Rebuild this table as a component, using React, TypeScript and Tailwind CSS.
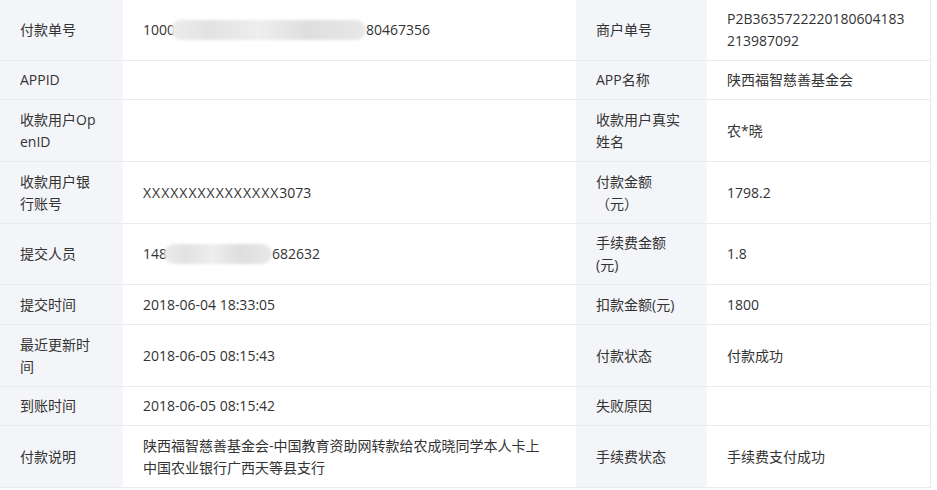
import React from "react";

type Row = {
  h: string;
  l1: React.ReactNode;
  v1?: React.ReactNode;
  l2: React.ReactNode;
  v2?: React.ReactNode;
};

function Masked({ width }: { width: string }) {
  // blurred part of an id, as in the screenshot
  return (
    <span
      className={`inline-block h-[20px] align-middle rounded-full blur-[1.5px] bg-[linear-gradient(90deg,#ececec_0%,#e2e2e2_20%,#eeeeee_45%,#dedede_70%,#e8e8e8_100%)] ${width}`}
    />
  );
}

const rows: Row[] = [
  {
    h: "h-[61px]",
    l1: "付款单号",
    v1: (
      <span className="flex items-center">
        <span>1000</span>
        <span className="-ml-[4px] flex"><Masked width="w-[195px]" /></span>
        <span>80467356</span>
      </span>
    ),
    l2: "商户单号",
    v2: (
      <>
        P2B3635722220180604183
        <br />
        213987092
      </>
    ),
  },
  { h: "h-[39px]", l1: "APPID", l2: "APP名称", v2: "陕西福智慈善基金会" },
  { h: "h-[62px]", l1: "收款用户OpenID", l2: "收款用户真实姓名", v2: "农*晓" },
  {
    h: "h-[62px]",
    l1: "收款用户银行账号",
    v1: (
      <span>
        <span className="tracking-[1px]">XXXXXXXXXXXXXXX</span>3073
      </span>
    ),
    l2: "付款金额（元）",
    v2: "1798.2",
  },
  {
    h: "h-[61px]",
    l1: "提交人员",
    v1: (
      <span className="flex items-center">
        <span>148</span>
        <span className="-ml-[3px] flex"><Masked width="w-[108px]" /></span>
        <span>682632</span>
      </span>
    ),
    l2: "手续费金额(元)",
    v2: "1.8",
  },
  { h: "h-[40px]", l1: "提交时间", v1: "2018-06-04 18:33:05", l2: "扣款金额(元)", v2: "1800" },
  { h: "h-[62px]", l1: "最近更新时间", v1: "2018-06-05 08:15:43", l2: "付款状态", v2: "付款成功" },
  { h: "h-[39px]", l1: "到账时间", v1: "2018-06-05 08:15:42", l2: "失败原因" },
  {
    h: "h-[62px]",
    l1: "付款说明",
    v1: "陕西福智慈善基金会-中国教育资助网转款给农成晓同学本人卡上中国农业银行广西天等县支行",
    l2: "手续费状态",
    v2: "手续费支付成功",
  },
];

export default function App() {
  return (
    <div className="w-[937px] h-[490px] bg-white overflow-hidden font-['Open_Sans','Noto_Sans_CJK_SC',sans-serif] text-[14px] leading-[22px] text-[#333]">
      <div className="w-[931px] border-r border-[#e8eaec]">
        {rows.map((r, i) => (
          <div
            key={i}
            className={cn(
              "grid grid-cols-[123px_453px_131px_223px] border-b border-[#e8eaec]",
              r.h
            )}
          >
            <div className="bg-[#f4f5f9] pl-[20px] pr-[27px] flex items-center break-all">{r.l1}</div>
            <div className="pl-[20px] pr-[30px] flex items-center">{r.v1}</div>
            <div className="bg-[#f4f5f9] pl-[20px] pr-[25px] flex items-center">{r.l2}</div>
            <div className="pl-[20px] pr-[10px] flex items-center">
              <div>{r.v2}</div>
            </div>
          </div>
        ))}
      </div>
    </div>
  );
}

function cn(...c: string[]) {
  return c.filter(Boolean).join(" ");
}
